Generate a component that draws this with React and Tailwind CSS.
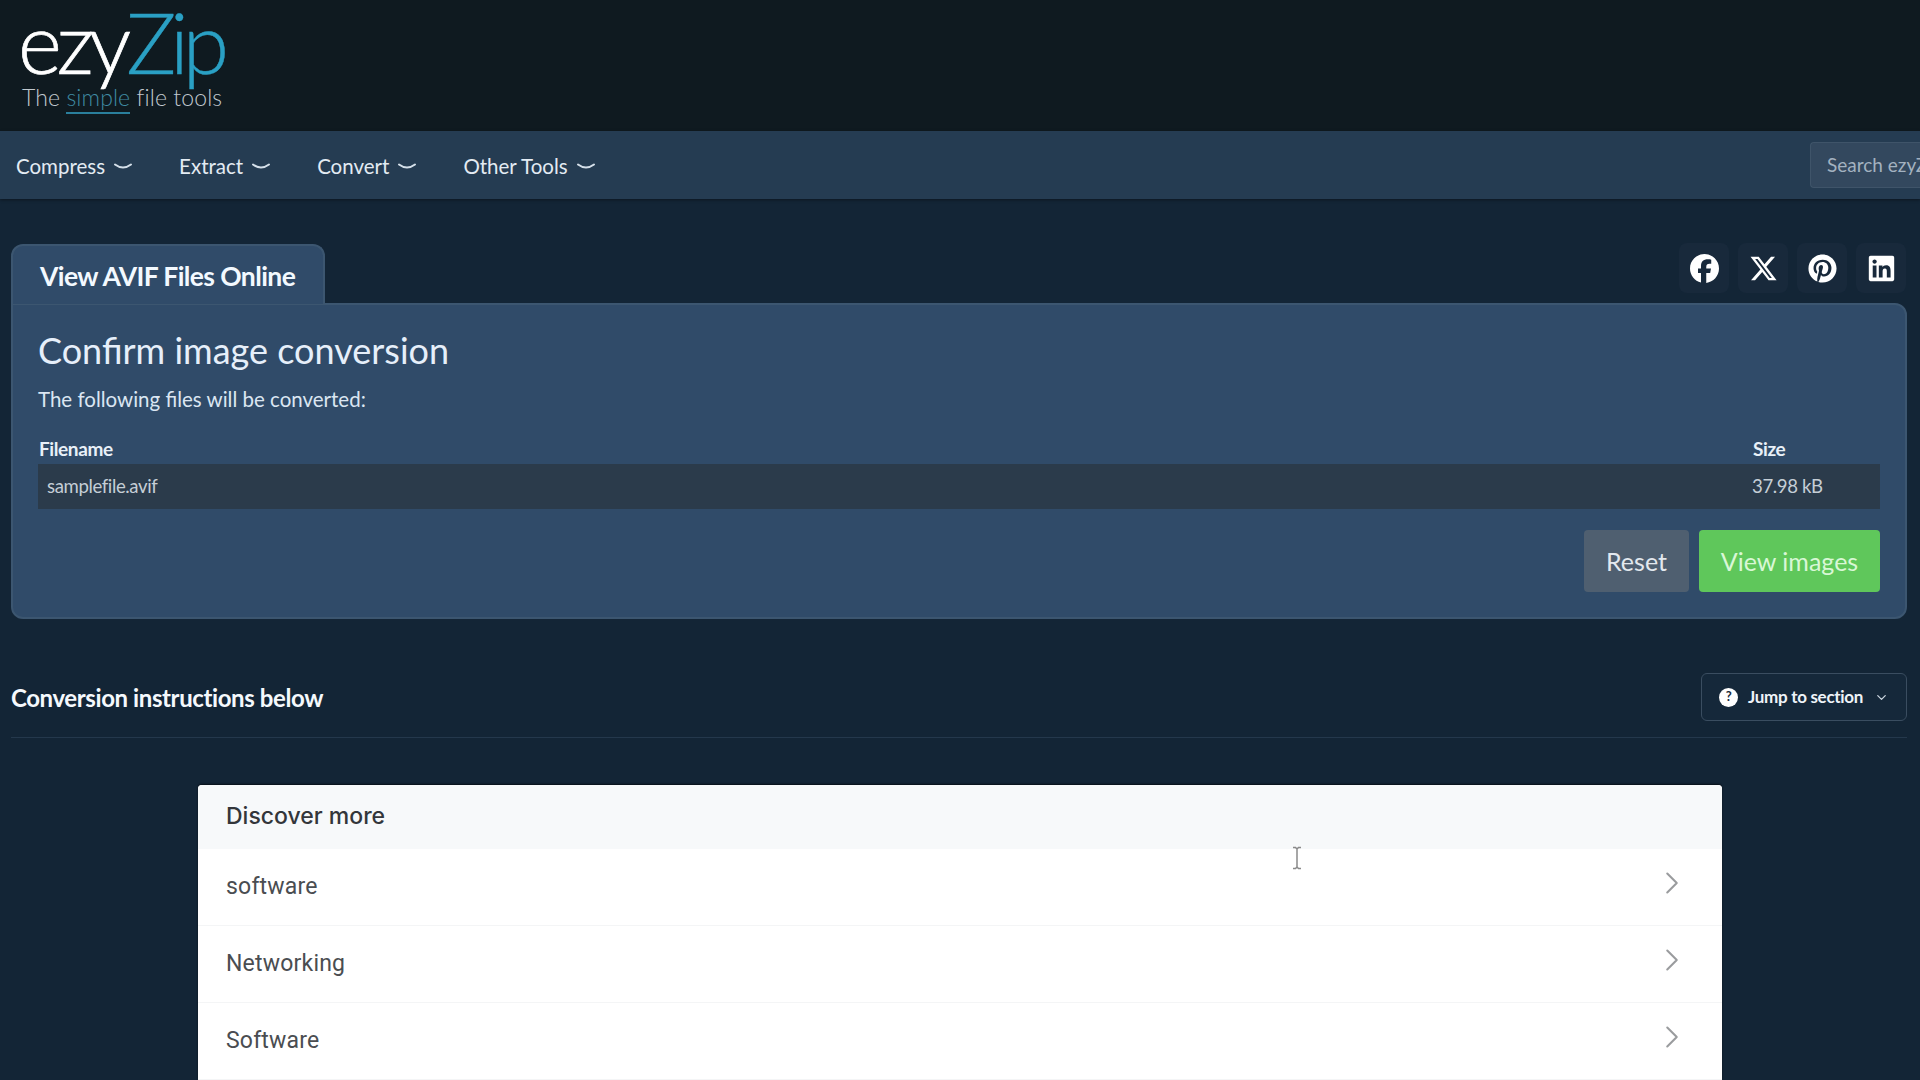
import { ChevronRight, ChevronDown } from 'lucide-react';
import { FaFacebook, FaXTwitter, FaPinterest, FaLinkedin } from 'react-icons/fa6';

const navItems = ['Compress', 'Extract', 'Convert', 'Other Tools'];
const discoverItems = ['software', 'Networking', 'Software'];
const socials = [FaFacebook, FaXTwitter, FaPinterest, FaLinkedin];

function NavCaret() {
  return (
    <svg width="18" height="7" viewBox="0 0 18 7" fill="none" className="ml-[9px]">
      <path d="M1 1.5 Q9 7.5 17 1.5" stroke="#d5e0ea" strokeWidth="2" strokeLinecap="round" />
    </svg>
  );
}

function Logo() {
  return (
    <div className="w-[260px] pl-[18px] pt-[12px]">
      <div className="flex h-[60px] items-baseline text-[84px] leading-[60px] font-light">
        <span className="tracking-[-5px] text-white [-webkit-text-stroke:0.7px_white]">ezy</span>
        <span className="tracking-[-6px] text-[#2aa0c4] [-webkit-text-stroke:0.4px_#2aa0c4]">Zip</span>
      </div>
      <div className="mt-[12px] pl-[4px] text-[23px] leading-[26px] font-light tracking-[0.1px] text-[#c0c8ce]">
        The{' '}
        <span className="border-b-2 border-[#2a7f9c] pb-[1px] text-[#3f8ba3]">simple</span>{' '}
        file tools
      </div>
    </div>
  );
}

export default function App() {
  return (
    <div className="relative h-screen overflow-hidden bg-[#132536] font-[Lato,sans-serif] text-[#e8f0f8]">
      {/* Header */}
      <header className="h-[131px] bg-[#0f1a20]">
        <Logo />
      </header>

      {/* Nav */}
      <nav className="flex h-[68px] items-center bg-[#253c52] pl-[16px] shadow-[0_1px_3px_rgba(0,0,0,0.4)]">
        {navItems.map(item => (
          <div key={item} className="mr-[47px] flex items-center pt-[2px] text-[20.5px] text-[#e3ebf3]">
            {item}
            <NavCaret />
          </div>
        ))}
        <div className="ml-auto flex h-[46px] w-[110px] items-center overflow-hidden whitespace-nowrap rounded-l border border-r-0 border-[#3f5469] bg-[#33485e] pl-[16px] text-[19px] text-[#a3b2c0]">
          Search ezyZip
        </div>
      </nav>

      <main className="pl-[11px] pr-[13px] pt-[45px]">
        {/* Tab row */}
        <div className="flex h-[59px] items-start justify-between">
          <div className="flex h-[60px] w-[314px] items-center rounded-t-xl border-2 border-b-0 border-[#3c5670] bg-[#304b69] pl-[27px] pt-[4px] text-[26.5px] font-bold tracking-[-0.6px] text-[#f3f9ff]">
            View AVIF Files Online
          </div>
          <div className="mr-[1px] mt-[-1px] flex gap-[9px]">
            {socials.map((Icon, i) => (
              <div key={i} className="flex h-[50px] w-[50px] items-center justify-center rounded-lg bg-[#18293b] text-white">
                <Icon size={29} />
              </div>
            ))}
          </div>
        </div>

        {/* Confirm card */}
        <section className="h-[316px] rounded-b-xl rounded-tr-xl border-2 border-[#3c5670] bg-[#304b69] pl-[25px] pr-[25px] pt-[23px]">
          <h2 className="text-[36px] leading-[45px] text-[#e6effa]">Confirm image conversion</h2>
          <p className="mt-[13px] text-[20.5px] leading-[26px] text-[#dbe6f2]">The following files will be converted:</p>
          <div className="mt-[23px] flex h-[29px] items-center justify-between pl-[1px] text-[19px] font-bold tracking-[-0.4px] text-[#e8f0f8]">
            <span>Filename</span>
            <span className="w-[127px]">Size</span>
          </div>
          <div className="flex h-[45px] items-center justify-between bg-[#2b3b4b] pl-[9px] text-[18.6px] tracking-[-0.4px] text-[#c5ced6]">
            <span>samplefile.avif</span>
            <span className="w-[128px]">37.98 kB</span>
          </div>
          <div className="mt-[21px] flex justify-end gap-[10px]">
            <button className="h-[62px] w-[105px] rounded bg-[#4f5f70] pt-[2px] text-[25px] text-[#e3e8ee]">Reset</button>
            <button className="h-[62px] w-[181px] rounded bg-[#5fc75b] pt-[2px] text-[25px] text-[#d9f7d6]">View images</button>
          </div>
        </section>

        {/* Instructions header */}
        <div className="mt-[54px] flex h-[48px] items-center justify-between">
          <h3 className="pt-[2px] text-[24px] font-bold tracking-[-0.4px] text-[#f5f9fd]">Conversion instructions below</h3>
          <button className="flex h-[48px] w-[206px] items-center rounded-md border border-[#3a4d60] bg-[#15283a] pl-[17px] text-[17px] font-bold tracking-[-0.3px] text-[#eef3f8]">
            <span className="flex h-[19px] w-[19px] items-center justify-center rounded-full bg-white text-[13px] font-bold text-[#18293b]">?</span>
            <span className="ml-[10px]">Jump to section</span>
            <ChevronDown size={15} className="ml-[11px] text-[#ccd6e0]" />
          </button>
        </div>
        <div className="mt-[16px] h-px bg-[#24384c]" />

        {/* Discover more */}
        <div className="ml-[187px] mt-[47px] w-[1524px] rounded-t bg-white font-[Roboto,sans-serif] shadow-[0_-1px_2px_rgba(0,0,0,0.6)]">
          <div className="flex h-[64px] items-center rounded-t bg-[#f7f9fa] pb-[2px] pl-[28px] font-[Inter,sans-serif] text-[23px] font-medium text-[#33363a]">
            Discover more
          </div>
          {discoverItems.map(item => (
            <div key={item} className="flex h-[77px] items-center justify-between border-b border-[#f4f5f6] pl-[28px] pr-[31px] pt-[1px] text-[23px] tracking-[0.2px] text-[#4a4d51]">
              {item}
              <ChevronRight size={38} strokeWidth={1.3} className="mt-[-10px] text-[#9a9c9e]" />
            </div>
          ))}
        </div>
      </main>

      {/* Text cursor over the panel */}
      <svg width="12" height="24" viewBox="0 0 12 24" fill="none" className="absolute left-[1291px] top-[846px]">
        <path d="M2 1.5h2.5L6 3l1.5-1.5H10M6 3v18M2 22.5h2.5L6 21l1.5 1.5H10" stroke="#8a8a8a" strokeWidth="1.5" />
      </svg>
    </div>
  );
}
